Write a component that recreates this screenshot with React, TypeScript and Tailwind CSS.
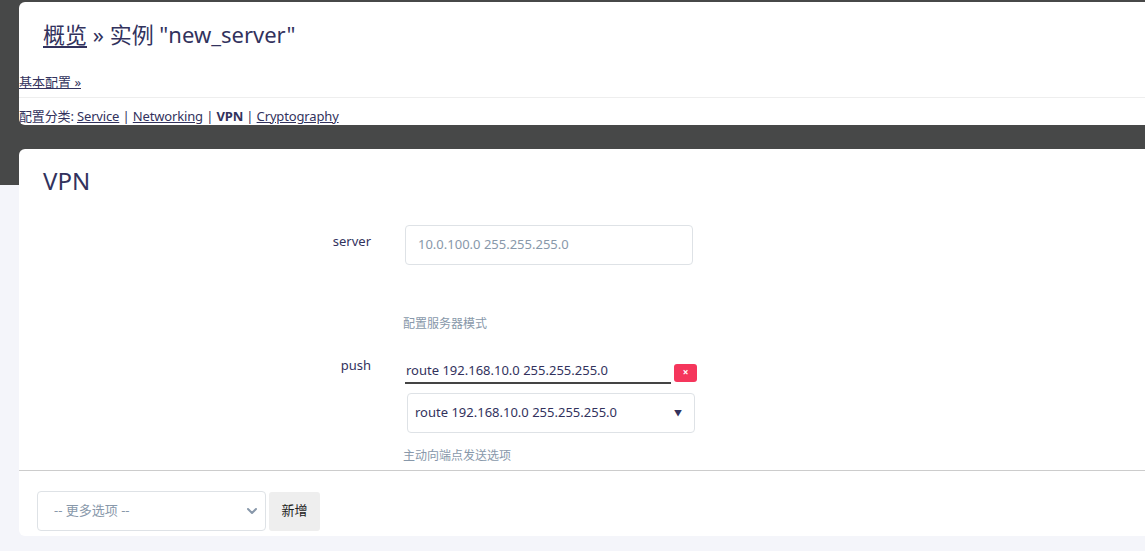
import { ChevronDown } from "lucide-react";

const font = "font-['Noto_Sans','Noto_Sans_CJK_SC',sans-serif]";

function FieldRow({
  label,
  children,
  hint,
}: {
  label: string;
  children: React.ReactNode;
  hint: string;
}) {
  return (
    <div className="flex">
      <div className="w-[352px] shrink-0 text-right text-[13px] text-[#32325d]">{label}</div>
      <div className="ml-[32px] flex flex-col">
        {children}
        <div className="text-[12px] text-[#8898aa]">{hint}</div>
      </div>
    </div>
  );
}

export default function App() {
  return (
    <div
      className={`${font} h-[551px] w-full overflow-hidden bg-[linear-gradient(#474848_0,#474848_185px,#f4f5fa_185px)] pl-[19px] pt-[2px] text-[#32325d]`}
    >
      {/* header card */}
      <div className="h-[123px] rounded-l-[6px] bg-white">
        <h2 className="pl-[24px] pt-[16px] text-[22px] leading-[32px] text-[#32325d]">
          <a className="underline underline-offset-[3px]">概览</a> » 实例 "new_server"
        </h2>
        <div className="mt-[23px] text-[13px] leading-[18px] text-[#32325d]">
          <a className="underline">基本配置 »</a>
        </div>
        <div className="mt-[6px] border-t border-[#eeeeee]" />
        <div className="mt-[9px] text-[13px] leading-[18px] tracking-[-0.15px] text-[#32325d]">
          配置分类: <a className="underline">Service</a> | <a className="underline">Networking</a> |{" "}
          <b className="font-bold">VPN</b> | <a className="underline">Cryptography</a>
        </div>
      </div>

      {/* VPN card */}
      <div className="mt-[24px] h-[387px] rounded-l-[6px] bg-white">
        <h3 className="pl-[24px] pt-[16px] text-[24px] leading-[32px] text-[#32325d]">VPN</h3>

        <div className="mt-[35px]">
          <FieldRow label="server" hint="配置服务器模式">
            <div className="relative -top-[7px] ml-[2px] flex h-[40px] w-[288px] items-center rounded-[4px] border border-[#dee2e6] px-[12px] text-[13px] text-[#8898aa]">
              10.0.100.0 255.255.255.0
            </div>
            <div className="mt-[43px]" />
          </FieldRow>
        </div>

        <div className="mt-[23px]">
          <FieldRow label="push" hint="主动向端点发送选项">
            <div className="ml-[2px] mt-[5px] flex items-center">
              <div className="h-[23px] w-[266px] border-b-2 border-[#444] pl-[1px] text-[13px] leading-[18px] text-[#32325d]">
                route 192.168.10.0 255.255.255.0
              </div>
              <button className="ml-[3px] flex h-[18px] w-[23px] items-center justify-center rounded-[3px] bg-[#f5365c] text-[10px] font-bold text-white">
                ×
              </button>
            </div>
            <div className="ml-[4px] mt-[9px] flex h-[40px] w-[288px] items-center justify-between rounded-[4px] border border-[#dee2e6] pl-[7px] pr-[12px] text-[13px] text-[#32325d]">
              <span>route 192.168.10.0 255.255.255.0</span>
              <span className="text-[8px]">▼</span>
            </div>
            <div className="mt-[14px]" />
          </FieldRow>
        </div>

        <div className="mt-[5px] border-t border-[#cccccc]" />
        <div className="flex items-center pl-[18px] pt-[20px]">
          <div className="flex h-[40px] w-[229px] items-center justify-between rounded-[4px] border border-[#dee2e6] pl-[16px] pr-[5px] text-[13px] text-[#8898aa]">
            <span>-- 更多选项 --</span>
            <ChevronDown size={16} strokeWidth={3} className="text-[#8898aa]" />
          </div>
          <button className="ml-[3px] h-[39px] w-[51px] rounded-[3px] bg-[#eeeeee] text-[13px] text-[#222]">新增</button>
        </div>
      </div>
    </div>
  );
}
